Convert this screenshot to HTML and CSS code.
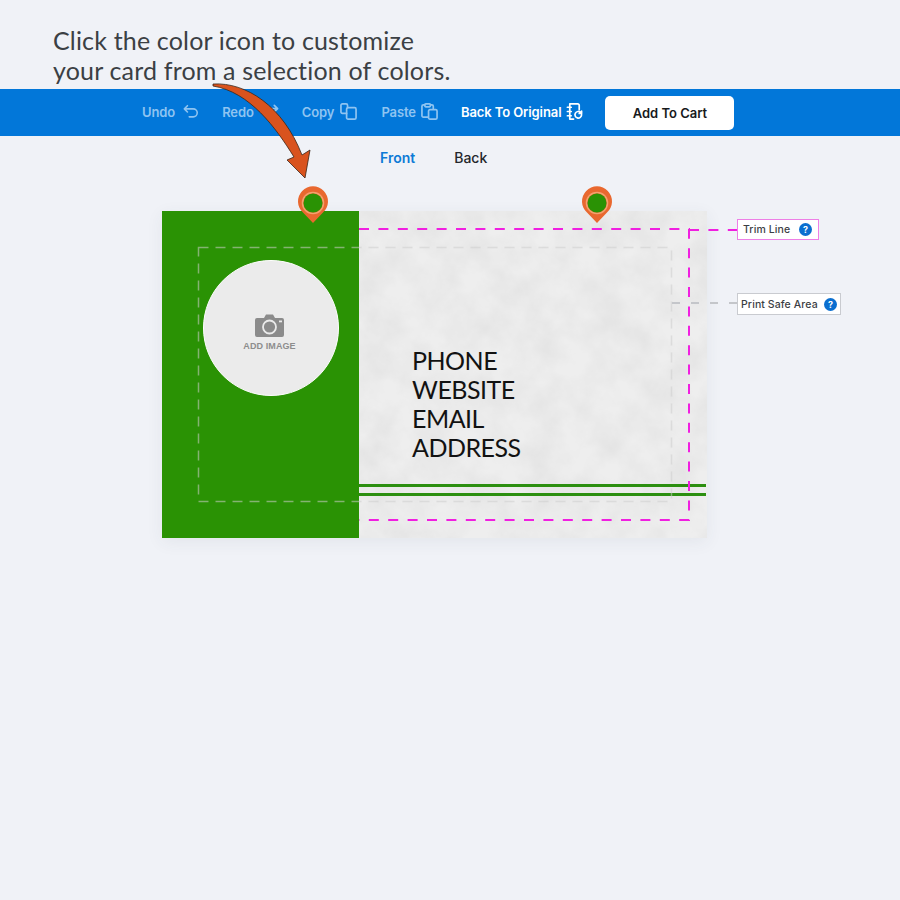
FILE: index.html
```html
<!DOCTYPE html>
<html lang="en">
<head>
    <meta charset="UTF-8">
    <meta name="viewport" content="width=device-width, initial-scale=1.0">
    <title>Customize Card</title>
    <link rel="stylesheet" href="styles.css">
</head>
<body>
    <div class="page">
        <p class="hint">Click the color icon to customize<br>your card from a selection of colors.</p>

        <!-- Toolbar -->
        <div class="toolbar">
            <span class="tool tool-wide is-off">Undo
                <svg class="tool-icon tool-icon-small" viewBox="0 0 18 16"><path d="M5 1.500 1.500 5 5 8.500M2 5h9.500a4.500 4.500 0 0 1 0 9H7"/></svg>
            </span>
            <span class="tool tool-wide is-off">Redo
                <svg class="tool-icon" viewBox="0 0 18 16"><path d="M13 1.500 16.500 5 13 8.500M16 5H6.500a4.500 4.500 0 0 0 0 9H11"/></svg>
            </span>
            <span class="tool is-off">Copy
                <svg class="tool-icon tool-icon-copy" viewBox="0 0 18 18"><path d="M7 11H2.500A1.500 1.500 0 0 1 1 9.500v-7A1.500 1.500 0 0 1 2.500 1h4A1.500 1.500 0 0 1 8 2.500V5"/><rect x="7" y="5" width="10" height="12" rx="1.500"/></svg>
            </span>
            <span class="tool is-off">Paste
                <svg class="tool-icon" viewBox="0 0 18 18"><path d="M7 15H2.500A1.500 1.500 0 0 1 1 13.500v-10A1.500 1.500 0 0 1 2.500 2H4M10 2h1.500A1.500 1.500 0 0 1 13 3.500V6"/><rect x="4" y="1" width="6" height="3" rx="1"/><rect x="8" y="7" width="9" height="10" rx="1.500"/></svg>
            </span>
            <span class="tool">Back To Original
                <svg class="tool-icon tool-icon-big" viewBox="0 0 18 18"><path d="M4 1h8.500A1.500 1.500 0 0 1 14 2.500V7M4 1v16M4 17h4M1.500 4.500h4M1.500 9h4M1.500 13.500h4"/><path d="M16.500 12.500a3.500 3.500 0 1 1-1-2.500l1 1M16.500 8.500V11H14"/></svg>
            </span>
            <button class="cart-btn">Add To Cart</button>
        </div>

        <div class="tabs">
            <span class="tab tab-active">Front</span>
            <span class="tab">Back</span>
        </div>

        <!-- Card preview -->
        <div class="card">
            <div class="card-left">
                <div class="add-image">
                    <svg class="camera" viewBox="0 0 29 23">
                        <path d="M2 4h7l2-3.500h7L20 4h7a2 2 0 0 1 2 2v15a2 2 0 0 1-2 2H2a2 2 0 0 1-2-2V6a2 2 0 0 1 2-2z"/>
                        <circle cx="14.500" cy="13" r="6.500" fill="none" stroke="#ebebeb" stroke-width="1.800"/>
                        <rect x="24" y="6.500" width="3" height="1.800" fill="#ebebeb"/>
                    </svg>
                    <span class="add-label">ADD IMAGE</span>
                </div>
            </div>
            <div class="card-right">
                <svg class="texture" width="348" height="327">
                    <filter id="grain">
                        <feTurbulence type="fractalNoise" baseFrequency="0.03" numOctaves="6" seed="7"/>
                        <feColorMatrix values="0 0 0 0 0.5  0 0 0 0 0.5  0 0 0 0 0.5  0.36 0 0 0 -0.11"/>
                    </filter>
                    <rect width="348" height="327" filter="url(#grain)"/>
                </svg>
                <div class="contact">
                    <div>PHONE</div>
                    <div>WEBSITE</div>
                    <div>EMAIL</div>
                    <div>ADDRESS</div>
                </div>
                <div class="rule"></div>
                <div class="rule"></div>
            </div>
        </div>

        <!-- Guides, pins and the arrow sit on top of everything -->
        <svg class="overlay" width="900" height="900" viewBox="0 0 900 900">
            <rect class="safe" x="198.500" y="247.500" width="473" height="254"/>
            <path class="safe-out" d="M672 303H737"/>
            <path class="trim" d="M359 229H689V520H359"/>
            <path class="trim" d="M689 230H737"/>

            <g class="pin">
                <path d="M313 223 303 212.500A15 15 0 1 1 323 212.500Z"/>
                <circle class="pin-ring" cx="313" cy="203" r="10.500"/>
                <circle class="pin-dot" cx="313" cy="203" r="9.500"/>
            </g>
            <g class="pin">
                <path d="M597 223 587 212.500A15 15 0 1 1 607 212.500Z"/>
                <circle class="pin-ring" cx="597" cy="203" r="10.500"/>
                <circle class="pin-dot" cx="597" cy="203" r="9.500"/>
            </g>

            <path class="arrow" d="M213 84C246 82 283 106 302 155L310 150 305 178 287 160 294 157C276 128 250 92 213 86Z"/>
        </svg>

        <div class="guide-label guide-trim">Trim Line <span class="help">?</span></div>
        <div class="guide-label guide-safe">Print Safe Area <span class="help">?</span></div>
    </div>
</body>
</html>
```

FILE: styles.css
```css
/* Global Styles */
body {
    margin: 0;
    padding: 0;
    background-color: #f0f2f7;
    font-family: 'Inter', 'Liberation Sans', sans-serif;
}

.page {
    position: relative;
    width: 900px;
    height: 900px;
    overflow: hidden;
}

.hint {
    margin: 0;
    padding: 25px 0 4px 53px;
    font-family: 'Lato', sans-serif;
    font-size: 25px;
    line-height: 30px;
    letter-spacing: 0.17px;
    color: #3b4044;
}

/* Toolbar */
.toolbar {
    display: flex;
    align-items: center;
    gap: 23px;
    height: 47px;
    padding-left: 142px;
    background-color: #0277d9;
}

.tool {
    display: flex;
    align-items: center;
    gap: 5px;
    margin-bottom: 2px;
    font-size: 13px;
    font-weight: 600;
    letter-spacing: -0.1px;
    color: #fff;
}

.tool-wide {
    gap: 8px;
}

.tool.is-off {
    color: #8fc4f1;
}

.tool-icon {
    width: 17px;
    height: 17px;
    fill: none;
    stroke: currentColor;
    stroke-width: 1.800;
    stroke-linecap: round;
    stroke-linejoin: round;
}

.tool-icon-small {
    width: 16px;
}

.tool-icon-copy {
    width: 19px;
}

.tool-icon-big {
    height: 19px;
}

.cart-btn {
    width: 129px;
    height: 34px;
    margin-left: -1px;
    border: none;
    border-radius: 5px;
    background-color: #fff;
    color: #17191c;
    font-family: inherit;
    font-size: 13px;
    font-weight: 600;
}

/* Front / Back tabs */
.tabs {
    display: flex;
    gap: 39px;
    height: 62px;
    padding: 13px 0 0 380px;
    font-size: 14px;
    font-weight: 500;
    line-height: 18px;
    color: #24272b;
}

.tab-active {
    color: #0d7ad6;
    font-weight: 600;
}

/* Card */
.card {
    display: flex;
    width: 545px;
    height: 327px;
    margin-left: 162px;
    box-shadow: 0 4px 16px rgba(60, 70, 90, 0.07);
}

.card-left {
    width: 197px;
    padding: 49px 0 0 41px;
    box-sizing: border-box;
    background-color: #2a9204;
}

.add-image {
    display: flex;
    flex-direction: column;
    align-items: center;
    justify-content: center;
    width: 136px;
    height: 136px;
    box-sizing: border-box;
    padding: 8px 3px 0 0;
    border: 1px solid #fff;
    border-radius: 50%;
    background-color: #ebebeb;
}

.camera {
    width: 29px;
    height: 23px;
    fill: #8b8b8b;
}

.add-label {
    margin-top: 4px;
    font-family: 'Liberation Sans', sans-serif;
    font-size: 9px;
    font-weight: 700;
    line-height: 10px;
    letter-spacing: 0.1px;
    color: #8d8d8d;
}

.card-right {
    position: relative;
    flex: 1;
    padding: 135px 0 0 53px;
    box-sizing: border-box;
    background-color: #eeeeee;
}

.texture {
    position: absolute;
    top: 0;
    left: 0;
}

.contact {
    position: relative;
    margin-bottom: 22px;
    font-family: 'Lato', sans-serif;
    font-size: 25px;
    line-height: 29px;
    letter-spacing: -0.5px;
    color: #121212;
}

.rule {
    position: relative;
    width: 347px;
    height: 3px;
    margin: 0 0 6px -53px;
    background-color: #2c8f10;
}

/* Overlay */
.overlay {
    position: absolute;
    top: 0;
    left: 0;
    pointer-events: none;
}

.safe {
    fill: none;
    stroke: #cdcdcd;
    stroke-opacity: 0.55;
    stroke-width: 1.500;
    stroke-dasharray: 10 7;
}

.safe-out {
    fill: none;
    stroke: #c4c6ca;
    stroke-width: 2;
    stroke-dasharray: 8 11;
}

.trim {
    fill: none;
    stroke: #f01fe0;
    stroke-width: 2;
    stroke-dasharray: 10 9.400;
}

.pin path {
    fill: #e9682f;
}

.pin-ring {
    fill: none;
    stroke: #f3a26f;
    stroke-width: 1.500;
}

.pin-dot {
    fill: #2a9204;
}

.arrow {
    fill: #d9531e;
    stroke: #3a2416;
    stroke-width: 0.800;
}

/* Guide labels */
.guide-label {
    position: absolute;
    left: 737px;
    display: flex;
    align-items: center;
    justify-content: space-between;
    box-sizing: border-box;
    background-color: #fff;
    font-size: 10.500px;
    font-weight: 500;
    letter-spacing: 0.1px;
    color: #3b3e44;
}

.guide-trim {
    top: 219px;
    width: 82px;
    height: 21px;
    padding: 0 6px 0 5px;
    border: 1.500px solid #ee7fe6;
}

.guide-safe {
    top: 293px;
    width: 104px;
    height: 22px;
    padding: 0 3px 0 3px;
    border: 1.500px solid #c9cbd0;
}

.help {
    display: flex;
    align-items: center;
    justify-content: center;
    width: 13px;
    height: 13px;
    border-radius: 50%;
    background-color: #0b6fd0;
    color: #fff;
    font-size: 9px;
    font-weight: 700;
}
```
